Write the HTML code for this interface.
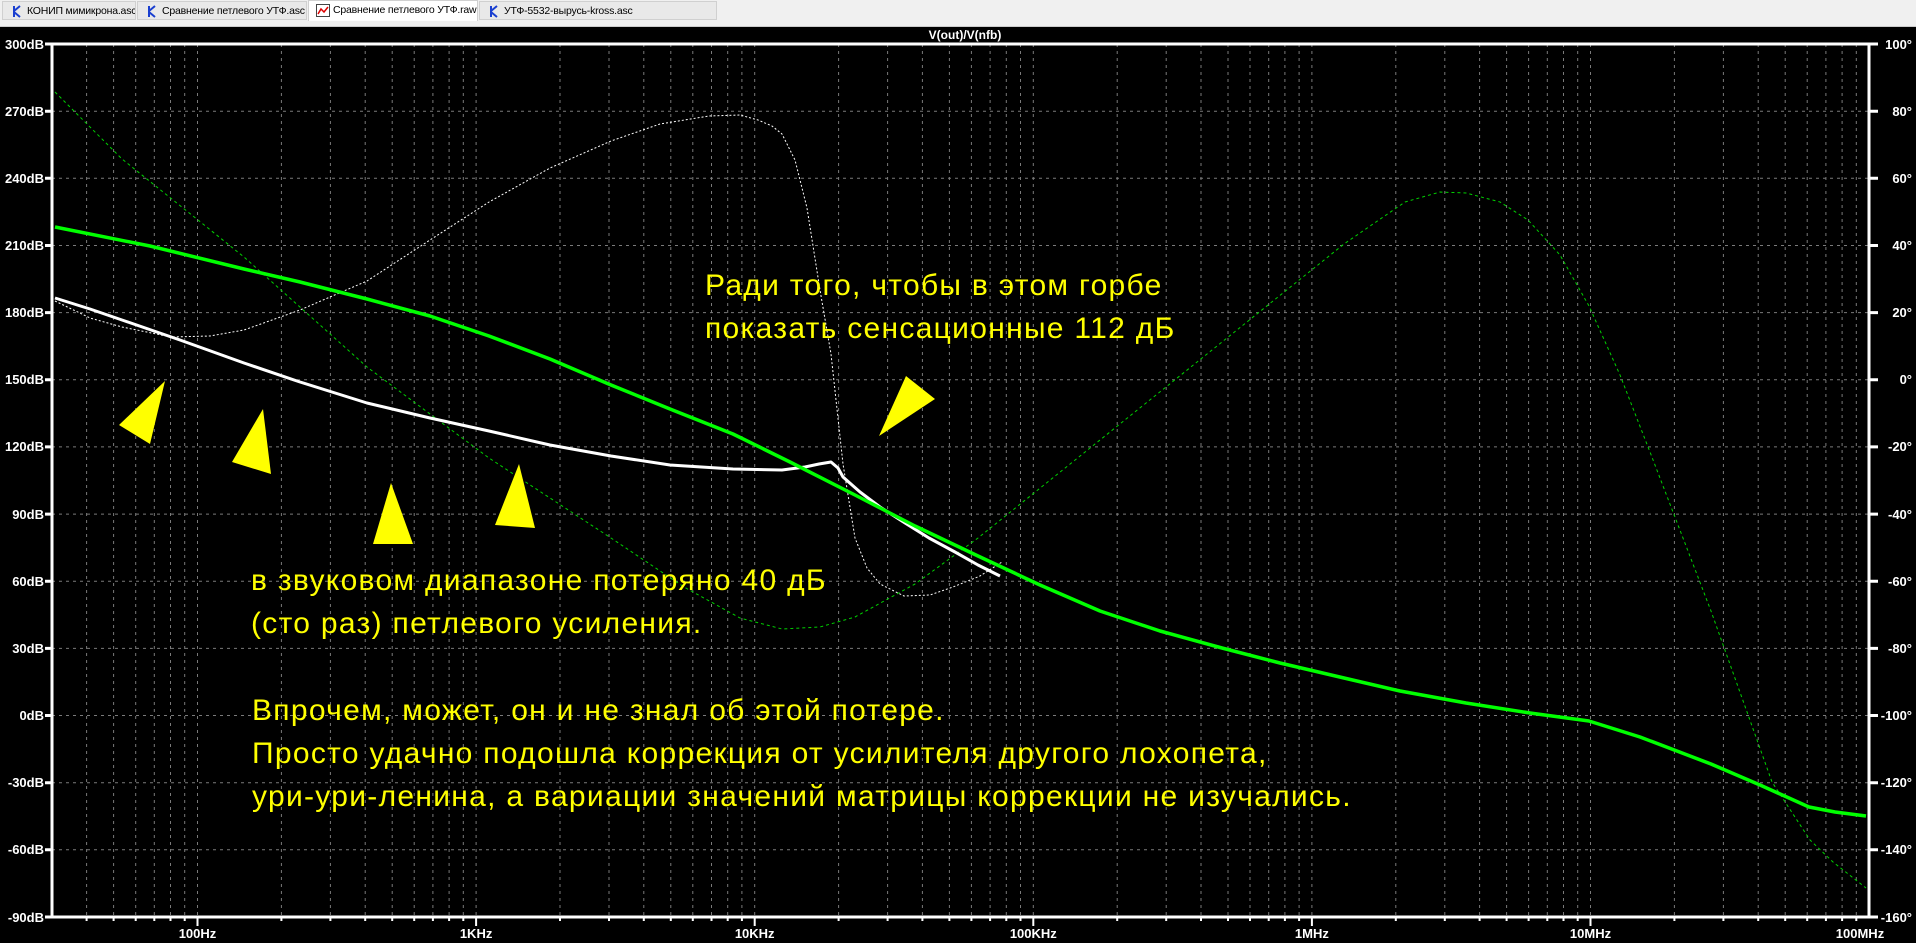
<!DOCTYPE html>
<html><head><meta charset="utf-8"><style>
html,body{margin:0;padding:0;width:1916px;height:943px;overflow:hidden;background:#000}
.tabs{position:absolute;left:0;top:0;width:1916px;height:21px;background:#f0f0f0;border-bottom:1px solid #d8d8d8}
.tab{position:absolute;top:1px;height:19px;font:10.5px "Liberation Sans",sans-serif;color:#000;line-height:19px;background:#e9e9e9;border:1px solid #d0d0d0;box-sizing:border-box;padding-left:24px;white-space:nowrap;overflow:hidden;letter-spacing:-0.2px}
.tab.act{background:#fff;top:0;height:21px;border-bottom:none}
.ic{position:absolute;left:7px;top:3px;width:14px;height:13px}
.sep{position:absolute;left:0;top:21px;width:1916px;height:5px;background:#f0f0f0;border-bottom:1px solid #ccc}
svg{position:absolute;left:0;top:0}
</style></head><body>
<div class="tabs">
<div class="tab" style="left:2px;width:134px"><svg class="ic" viewBox="0 0 14 13"><path d="M4 1V12M4 6L10 1M4 7L10 12" stroke="#1a3fd0" stroke-width="2" fill="none"/></svg>КОНИП мимикрона.asc</div>
<div class="tab" style="left:137px;width:170px"><svg class="ic" viewBox="0 0 14 13"><path d="M4 1V12M4 6L10 1M4 7L10 12" stroke="#1a3fd0" stroke-width="2" fill="none"/></svg>Сравнение петлевого УТФ.asc</div>
<div class="tab act" style="left:308px;width:170px"><svg class="ic" viewBox="0 0 14 13"><rect x="0.5" y="0.5" width="13" height="12" fill="#fff" stroke="#444"/><path d="M2 10L5 5L8 8L12 3" stroke="#d00" stroke-width="1.5" fill="none"/></svg>Сравнение петлевого УТФ.raw</div>
<div class="tab" style="left:479px;width:238px"><svg class="ic" viewBox="0 0 14 13"><path d="M4 1V12M4 6L10 1M4 7L10 12" stroke="#1a3fd0" stroke-width="2" fill="none"/></svg>УТФ-5532-вырусь-kross.asc</div>
</div>
<div class="sep"></div>
<svg width="1916" height="943" viewBox="0 0 1916 943" style="top:0">
<rect x="0" y="27" width="1916" height="916" fill="#000"/>
<g stroke="#7a7a7a" stroke-width="1" stroke-dasharray="3,4" fill="none">
<path d="M86.6 44V917M113.6 44V917M135.7 44V917M154.3 44V917M170.5 44V917M184.7 44V917M197.5 44V917M281.4 44V917M330.4 44V917M365.2 44V917M392.2 44V917M414.2 44V917M432.9 44V917M449.1 44V917M463.3 44V917M476.1 44V917M560 44V917M609 44V917M643.8 44V917M670.8 44V917M692.8 44V917M711.5 44V917M727.7 44V917M741.9 44V917M754.7 44V917M838.6 44V917M887.6 44V917M922.4 44V917M949.4 44V917M971.4 44V917M990.1 44V917M1006.3 44V917M1020.5 44V917M1033.3 44V917M1117.2 44V917M1166.2 44V917M1201 44V917M1228 44V917M1250 44V917M1268.7 44V917M1284.9 44V917M1299.1 44V917M1311.9 44V917M1395.8 44V917M1444.8 44V917M1479.6 44V917M1506.6 44V917M1528.6 44V917M1547.3 44V917M1563.5 44V917M1577.7 44V917M1590.5 44V917M1674.4 44V917M1723.4 44V917M1758.2 44V917M1785.2 44V917M1807.2 44V917M1825.9 44V917M1842.1 44V917M1856.3 44V917"/>
<path d="M52 111.2H1869M52 178.3H1869M52 245.5H1869M52 312.6H1869M52 379.8H1869M52 446.9H1869M52 514.1H1869M52 581.2H1869M52 648.4H1869M52 715.5H1869M52 782.7H1869M52 849.8H1869"/>
</g>
<g stroke="#fff" stroke-width="3" fill="none">
<path d="M52 44H1869V917H52Z"/>
<path d="M45 44H52M45 111.2H52M45 178.3H52M45 245.5H52M45 312.6H52M45 379.8H52M45 446.9H52M45 514.1H52M45 581.2H52M45 648.4H52M45 715.5H52M45 782.7H52M45 849.8H52M45 917H52"/>
<path d="M1869 44H1878M1869 111.2H1878M1869 178.3H1878M1869 245.5H1878M1869 312.6H1878M1869 379.8H1878M1869 446.9H1878M1869 514.1H1878M1869 581.2H1878M1869 648.4H1878M1869 715.5H1878M1869 782.7H1878M1869 849.8H1878M1869 917H1878"/>
<path stroke-width="2" d="M197.5 917V926M476.1 917V926M754.7 917V926M1033.3 917V926M1311.9 917V926M1590.5 917V926M86.6 917V921M113.6 917V921M135.7 917V921M154.3 917V921M170.5 917V921M184.7 917V921M281.4 917V921M330.4 917V921M365.2 917V921M392.2 917V921M414.2 917V921M432.9 917V921M449.1 917V921M463.3 917V921M560 917V921M609 917V921M643.8 917V921M670.8 917V921M692.8 917V921M711.5 917V921M727.7 917V921M741.9 917V921M838.6 917V921M887.6 917V921M922.4 917V921M949.4 917V921M971.4 917V921M990.1 917V921M1006.3 917V921M1020.5 917V921M1117.2 917V921M1166.2 917V921M1201 917V921M1228 917V921M1250 917V921M1268.7 917V921M1284.9 917V921M1299.1 917V921M1395.8 917V921M1444.8 917V921M1479.6 917V921M1506.6 917V921M1528.6 917V921M1547.3 917V921M1563.5 917V921M1577.7 917V921M1674.4 917V921M1723.4 917V921M1758.2 917V921M1785.2 917V921M1807.2 917V921M1825.9 917V921M1842.1 917V921M1856.3 917V921"/>
</g>
<g font-family="Liberation Sans, sans-serif" font-weight="bold" font-size="13" fill="#fff">
<g text-anchor="end">
<text x="44" y="49">300dB</text><text x="44" y="116">270dB</text><text x="44" y="183">240dB</text><text x="44" y="250">210dB</text><text x="44" y="317">180dB</text><text x="44" y="384">150dB</text><text x="44" y="451">120dB</text><text x="44" y="519">90dB</text><text x="44" y="586">60dB</text><text x="44" y="653">30dB</text><text x="44" y="720">0dB</text><text x="44" y="787">-30dB</text><text x="44" y="854">-60dB</text><text x="44" y="922">-90dB</text>
<text x="1912" y="49">100°</text><text x="1912" y="116">80°</text><text x="1912" y="183">60°</text><text x="1912" y="250">40°</text><text x="1912" y="317">20°</text><text x="1912" y="384">0°</text><text x="1912" y="451">-20°</text><text x="1912" y="519">-40°</text><text x="1912" y="586">-60°</text><text x="1912" y="653">-80°</text><text x="1912" y="720">-100°</text><text x="1912" y="787">-120°</text><text x="1912" y="854">-140°</text><text x="1912" y="922">-160°</text>
</g>
<g text-anchor="middle">
<text x="197.5" y="938">100Hz</text><text x="476.1" y="938">1KHz</text><text x="754.7" y="938">10KHz</text><text x="1033.3" y="938">100KHz</text><text x="1311.9" y="938">1MHz</text><text x="1590.5" y="938">10MHz</text><text x="1860" y="938">100MHz</text>
<text x="965" y="39" font-size="12">V(out)/V(nfb)</text>
</g>
</g>
<g fill="none" stroke-linejoin="round">
<polyline stroke="#00d000" stroke-width="1" stroke-dasharray="3,3" points="55,92 122,159 244,257 367,367 489,458 611,538 684,587 740,618 782,629 820,627 855,617 915,584 978,538 1100,440 1222,342 1344,244 1405,202 1440,192 1466,193 1500,202 1528,220 1560,255 1589,306 1620,375 1650,452 1711,611 1772,782 1810,840 1833,862 1866,888"/>
<polyline stroke="#fff" stroke-width="1" stroke-dasharray="2,2" points="55,301 90,318 122,327 171,337 210,336 244,330 300,310 367,281 430,240 489,202 550,168 611,141 660,124 709,116 740,115 758,120 772,126 782,134 795,160 807,208 820,290 831,354 843,464 855,538 867,568 880,584 904,596 930,595 953,587 980,576 1002,562"/>
<polyline stroke="#fff" stroke-width="3" points="55,298 90,309 122,320 180,340 244,363 300,382 367,403 430,418 489,431 550,445 611,456 670,465 733,469 782,470 805,467 819,464 831,462 838,468 843,477 860,492 880,507 905,523 929,538 955,552 978,565 1000,576"/>
<polyline stroke="#00ff00" stroke-width="3.5" points="55,227 150,246 244,269 300,282 367,299 430,316 489,336 550,359 611,385 670,409 733,434 790,462 855,495 915,526 978,556 1040,585 1100,611 1160,631 1222,648 1280,663 1344,678 1400,691 1466,703 1530,713 1589,721 1640,737 1711,764 1760,785 1809,807 1835,812 1866,816"/>
</g>
<g fill="#ffff00">
<polygon points="119,425 165,381 150,444"/>
<polygon points="232,462 263,409 271,474"/>
<polygon points="373,544 391,483 413,544"/>
<polygon points="495,525 519,464 535,528"/>
<polygon points="879,436 906,376 935,399"/>
</g>
<g font-family="Liberation Sans, sans-serif" font-size="30" fill="#ffff00" letter-spacing="1.3">
<text x="705" y="295">Ради того, чтобы в этом горбе</text>
<text x="705" y="338">показать сенсационные 112 дБ</text>
<text x="251" y="590">в звуковом диапазоне потеряно 40 дБ</text>
<text x="251" y="633">(сто раз) петлевого усиления.</text>
<text x="252" y="720">Впрочем, может, он и не знал об этой потере.</text>
<text x="252" y="763">Просто удачно подошла коррекция от усилителя другого лохопета,</text>
<text x="252" y="806">ури-ури-ленина, а вариации значений матрицы коррекции не изучались.</text>
</g>
</svg>
</body></html>
